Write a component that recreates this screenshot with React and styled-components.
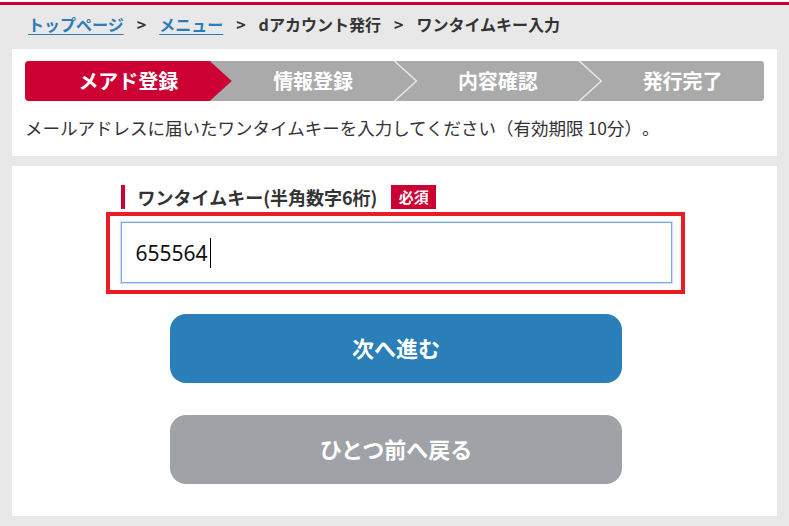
import React, { useState } from 'react';
import styled, { createGlobalStyle, css } from 'styled-components';

const GlobalStyle = createGlobalStyle`
  html, body {
    margin: 0;
    padding: 0;
    background: #ffffff;
  }
  body {
    font-family: 'Noto Sans CJK JP', 'Noto Sans', sans-serif;
    color: #333333;
    text-spacing-trim: space-all;
  }
  * { box-sizing: border-box; }
`;

const Page = styled.div`
  margin-top: 2px;
  border-top: 3px solid #cc0033;
  background: #e8e8e8;
  padding: 0 12px 10px;
`;

const Breadcrumb = styled.nav`
  display: flex;
  align-items: center;
  padding: 7px 0 13px 16px;
  font-size: 16px;
  line-height: 24px;
  font-weight: 700;
  color: #333333;
`;

const Crumb = styled.a`
  color: #2b7cb8;
  text-decoration: underline;
  text-underline-offset: 3px;
  text-decoration-thickness: 1px;
  cursor: pointer;
`;

const Sep = styled.span`
  margin: 0 13px;
  color: #333333;
`;

const Panel = styled.section`
  background: #ffffff;
  ${p => p.$form && css`
    margin-top: 10px;
    display: flex;
    flex-direction: column;
    align-items: center;
    padding: 19px 0 32px 3px;
  `}
  ${p => !p.$form && css`
    padding: 12px 13px 14px;
  `}
`;

const StepBar = styled.ol`
  display: flex;
  margin: 0;
  padding: 0;
  list-style: none;
  height: 40px;
  border-radius: 4px;
  overflow: hidden;
  background: #aaaaaa;
`;

const Step = styled.li`
  position: relative;
  flex: 1;
  display: flex;
  align-items: center;
  justify-content: center;
  padding: 0 0 2px 22px;
  font-size: 20px;
  font-weight: 700;
  color: #ffffff;
  background: ${p => (p.$active ? '#cc0033' : '#aaaaaa')};

  ${p => p.$active && css`
    &::after {
      content: '';
      position: absolute;
      top: 0;
      right: -22px;
      width: 22px;
      height: 100%;
      background: #cc0033;
      clip-path: polygon(0 0, 100% 50%, 0 100%);
      z-index: 2;
    }
  `}

  ${p => p.$chevron && css`
    &::after {
      content: '';
      position: absolute;
      top: 0;
      right: -23px;
      width: 24px;
      height: 100%;
      background: #ececec;
      clip-path: polygon(0 0, 2px 0, 100% 50%, 2px 100%, 0 100%, calc(100% - 2px) 50%);
      z-index: 2;
    }
  `}
`;

const Note = styled.p`
  margin: 13px 0 0;
  font-size: 17.5px;
  line-height: 28px;
  color: #333333;
  font-feature-settings: "chws" 0, "halt" 0, "palt" 0;
`;

const FieldGroup = styled.div`
  width: 551px;
`;

const LabelRow = styled.div`
  display: flex;
  align-items: center;
  height: 24px;
  gap: 14px;
`;

const Label = styled.label`
  display: flex;
  align-items: center;
  height: 24px;
  padding: 0 0 1px 13px;
  border-left: 4px solid #cc0033;
  font-size: 18px;
  font-weight: 700;
  color: #333333;
`;

const Required = styled.span`
  display: inline-flex;
  align-items: center;
  justify-content: center;
  width: 45px;
  height: 24px;
  padding-bottom: 1px;
  background: #cc0033;
  color: #ffffff;
  font-size: 15px;
  font-weight: 700;
`;

const Highlight = styled.div`
  margin: 3px -13px 0 -15px;
  border: 4px solid #ec1c24;
  padding: 6px 9px 7px 11px;
`;

const InputWrap = styled.div`
  position: relative;
`;

const KeyInput = styled.input`
  display: block;
  width: 100%;
  height: 61px;
  padding: 0 14px;
  border: 1px solid #7ba7e5;
  box-shadow: 0 0 1px 1px rgba(123, 167, 229, 0.35);
  outline: none;
  font-family: 'Noto Sans', 'Noto Sans CJK JP', sans-serif;
  font-size: 21px;
  color: #111111;
  caret-color: transparent;
  background: #ffffff;
`;

/* mirror of the typed value, so the caret sits right after the text */
const CaretLayer = styled.div`
  position: absolute;
  inset: 0;
  display: flex;
  align-items: center;
  padding: 0 15px;
  font-family: 'Noto Sans', 'Noto Sans CJK JP', sans-serif;
  font-size: 21px;
  pointer-events: none;
`;

const Ghost = styled.span`
  visibility: hidden;
  white-space: pre;
`;

const Caret = styled.span`
  width: 1px;
  height: 30px;
  margin-left: 2px;
  background: #000000;
`;

const ActionButton = styled.button`
  display: flex;
  align-items: center;
  justify-content: center;
  width: 452px;
  height: 69px;
  margin-top: ${p => p.$gap}px;
  padding: 0 0 4px;
  border: none;
  border-radius: 16px;
  background: ${p => p.$color};
  color: #ffffff;
  font-family: 'Noto Sans CJK JP', sans-serif;
  font-size: 22px;
  font-weight: 700;
  cursor: pointer;
`;

const steps = ['メアド登録', '情報登録', '内容確認', '発行完了'];

export default function App() {
  const [code, setCode] = useState('655564');

  return (
    <>
      <GlobalStyle />
      <Page>
        <Breadcrumb>
          <Crumb>トップページ</Crumb>
          <Sep>&gt;</Sep>
          <Crumb>メニュー</Crumb>
          <Sep>&gt;</Sep>
          <span>dアカウント発行</span>
          <Sep>&gt;</Sep>
          <span>ワンタイムキー入力</span>
        </Breadcrumb>

        <Panel>
          <StepBar>
            {steps.map((s, i) => (
              <Step
                key={s}
                $active={i === 0}
                $chevron={i > 0 && i < steps.length - 1}
              >
                {s}
              </Step>
            ))}
          </StepBar>
          <Note>メールアドレスに届いたワンタイムキーを入力してください（有効期限 10分）。</Note>
        </Panel>

        <Panel $form>
          <FieldGroup>
            <LabelRow>
              <Label htmlFor="onetime">ワンタイムキー(半角数字6桁)</Label>
              <Required>必須</Required>
            </LabelRow>
            <Highlight>
              <InputWrap>
                <KeyInput
                  id="onetime"
                  value={code}
                  onChange={e => setCode(e.target.value)}
                />
                <CaretLayer>
                  <Ghost>{code}</Ghost>
                  <Caret />
                </CaretLayer>
              </InputWrap>
            </Highlight>
          </FieldGroup>
          <ActionButton $color="#2a7fb8" $gap={20}>次へ進む</ActionButton>
          <ActionButton $color="#9fa3a7" $gap={32}>ひとつ前へ戻る</ActionButton>
        </Panel>
      </Page>
    </>
  );
}
